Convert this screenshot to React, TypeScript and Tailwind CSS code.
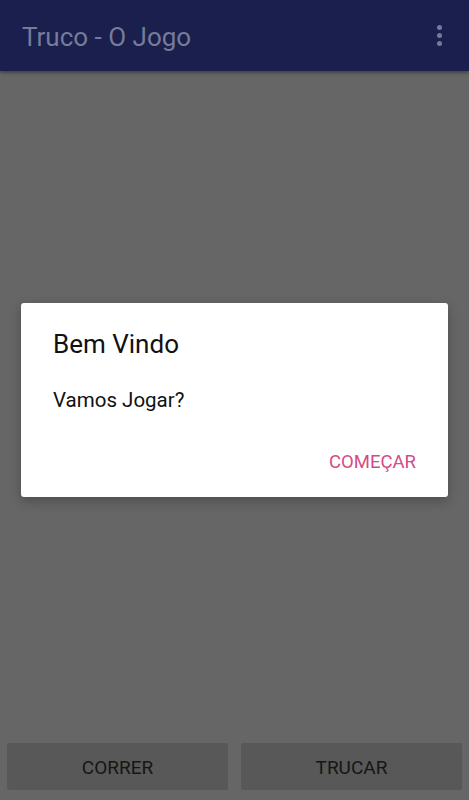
import React from "react";

export default function App() {
  return (
    <div className="relative w-[469px] h-[800px] flex flex-col bg-[#666666] overflow-hidden" style={{ fontFamily: "Roboto, 'Noto Sans', sans-serif" }}>
      <header className="h-[71px] shrink-0 bg-[#1a1f4d] flex items-center justify-between pl-[22px] pr-[27px] pt-[2px] shadow-[0_2px_3px_rgba(0,0,0,0.35)] z-10">
        <span className="text-[26px] text-[#767b99] leading-none">Truco - O Jogo</span>
        <div className="flex flex-col items-center gap-[3px] -mt-[2px]">
          <span className="w-[5px] h-[5px] rounded-full bg-[#767b99]" />
          <span className="w-[5px] h-[5px] rounded-full bg-[#767b99]" />
          <span className="w-[5px] h-[5px] rounded-full bg-[#767b99]" />
        </div>
      </header>
      <main className="flex-1" />
      <footer className="flex gap-[13px] px-[7px] pb-[10px]">
        <button className="flex-1 h-[47px] pt-[4px] rounded-[2px] bg-[#585858] text-[19px] text-[#161616]">CORRER</button>
        <button className="flex-1 h-[47px] pt-[4px] rounded-[2px] bg-[#585858] text-[19px] text-[#161616]">TRUCAR</button>
      </footer>
      <div className="absolute inset-0 flex items-center justify-center">
        <div className="w-[427px] h-[194px] bg-white rounded-[3px] flex flex-col pl-[32px] pr-[32px] pt-[28px] shadow-[0_4px_12px_rgba(0,0,0,0.25)]">
          <div className="text-[26px] text-[#111111] leading-none">Bem Vindo</div>
          <div className="mt-[33px] text-[20.5px] text-[#111111] leading-none">Vamos Jogar?</div>
          <div className="mt-[42px] flex justify-end">
            <span className="text-[18.5px] text-[#d64a85] leading-none">COMEÇAR</span>
          </div>
        </div>
      </div>
    </div>
  );
}
